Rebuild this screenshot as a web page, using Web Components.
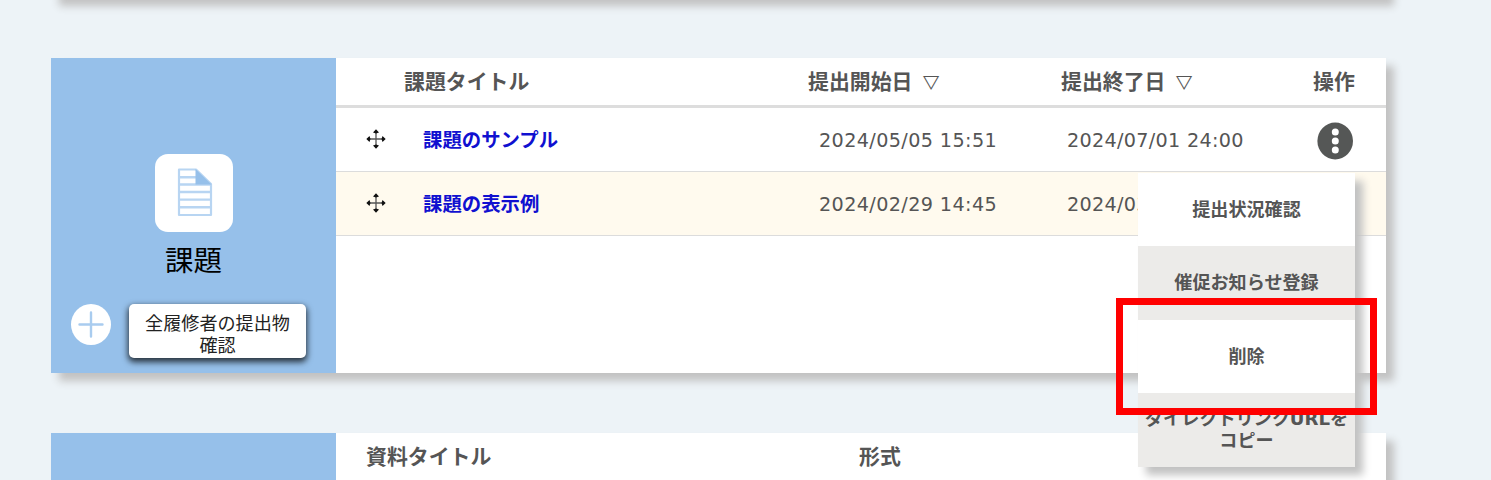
<!DOCTYPE html>
<html lang="ja">
<head>
<meta charset="utf-8">
<title>課題</title>
<style>
html,body{margin:0;height:480px;overflow:hidden;background:#edf3f7}
body{font-family:"DejaVu Sans","Noto Sans CJK JP",sans-serif;color:#555}
</style>
</head>
<body>
<course-page></course-page>
<script>
const define=(name,html)=>customElements.define(name,class extends HTMLElement{
  constructor(){super();this.attachShadow({mode:'open'}).innerHTML=html;}
});

define('course-card',`<style>
:host{display:grid;grid-template-columns:285px 1fr;background:#fff;box-shadow:8px 8px 8px #c2c2c2;box-sizing:border-box}
.side{background:#96c0ea;display:flex;flex-direction:column;min-width:0}
.body{min-width:0}
</style><div class="side"><slot name="side"></slot></div><div class="body"><slot></slot></div>`);

define('side-panel',`<style>
:host{display:flex;flex-direction:column;align-items:center;color:#000;padding-top:96px}
svg{display:block}
h2{font:400 28.5px/40px "Noto Sans CJK JP",sans-serif;margin:7px 0 1px}
.actions{display:flex;align-self:stretch;padding:24px 30px 0 20px;gap:18px;align-items:flex-start}
button{flex:1;height:54px;padding:7px 0 0;border:0;border-radius:5px;background:#fff;color:#222;font:400 18.1px/22px "DejaVu Sans","Noto Sans CJK JP",sans-serif;box-shadow:0 3px 6px 1px rgba(0,0,0,.75)}
</style>
<svg width="78" height="78" viewBox="0 0 78 78"><rect width="78" height="78" rx="13" fill="#fff"/>
<path d="M24 15.500H41L56 30V61H24Z" fill="#fff" stroke="#b8d5f2" stroke-width="2.200" stroke-linejoin="round"/>
<path d="M24 23.200H41M24 30.500H56M24 38H56M24 45.600H56M24 53.200H56" stroke="#b8d5f2" stroke-width="2.400"/>
<path d="M40.500 15L56.500 30.500H40.500Z" fill="#96c0ea"/></svg>
<h2>課題</h2>
<div class="actions"><svg width="40" height="42" viewBox="0 0 40 42"><ellipse cx="20" cy="20.500" rx="20" ry="20.500" fill="#fff"/><path d="M8.500 20.500H31.500M20 8.500V32.500" stroke="#a9ccef" stroke-width="2.400" stroke-linecap="round"/></svg>
<button>全履修者の提出物<br>確認</button></div>`);

define('head-row',`<style>
:host{display:flex;height:44px;padding:0 30px 3px 68px;border-bottom:3px solid #ddd;align-items:center;font:700 20.9px/30px "Noto Sans CJK JP",sans-serif;color:#555;white-space:nowrap}
</style><slot></slot>`);
define('head-cell',`<style>:host{display:flex;align-items:center;flex:none;width:var(--w,auto)}</style><slot></slot>`);
define('sort-mark',`<style>:host{display:block;margin:3px 0 0 10.500px;transform:scaleY(.87);font:400 21px/24px "DejaVu Sans","Noto Sans CJK JP",sans-serif}</style><slot></slot>`);

define('task-row',`<style>
:host{display:grid;grid-template-columns:57px 396px 248px 250px 1fr;height:63px;padding-left:30px;align-items:center;border-bottom:1px solid #dcdcdc;background:var(--row,#fff);font-size:19.2px;letter-spacing:.38px;white-space:nowrap}
svg{display:block;margin-top:-2px}
.t{font:700 19.4px/28px "Noto Sans CJK JP",sans-serif;letter-spacing:0;color:#1010d0;margin-top:-2px}
::slotted(span[slot=start]),::slotted(span[slot=end]){padding-top:2px}
::slotted(span[slot=end]){letter-spacing:.3px}
</style>
<svg width="20" height="20" viewBox="0 0 20 20" fill="#111"><path d="M10 3V17M3 10H17" stroke="#555" stroke-width="1.300"/><path d="M10 .3L13 3.500L10 4.500L7 3.500ZM10 19.700L13 16.500L10 15.500L7 16.500ZM.3 10L3.500 7L4.500 10L3.500 13ZM19.700 10L16.500 7L15.500 10L16.500 13Z"/></svg>
<span class="t"><slot name="title"></slot></span><slot name="start"></slot><slot name="end"></slot><slot name="op"></slot>`);

define('more-button',`<style>:host{display:block}svg{display:block;margin-top:3px}</style>
<svg width="36" height="38" viewBox="0 0 36 38"><ellipse cx="18.200" cy="19" rx="17.800" ry="18.500" fill="#555756"/><g fill="#fff"><circle cx="18.300" cy="10" r="3.500"/><circle cx="18.300" cy="19" r="3.500"/><circle cx="18.300" cy="28" r="3.500"/></g></svg>`);

define('action-menu',`<style>
:host{position:absolute;left:1138px;top:173px;width:217px;height:294px;display:grid;grid-template-rows:73px 74px 73px 74px;box-shadow:8px 8px 8px #c2c2c2;background:#fff}
::slotted(div){display:flex;align-items:center;justify-content:center;text-align:center;font:700 18.1px/22px "DejaVu Sans","Noto Sans CJK JP",sans-serif;color:#555;white-space:nowrap}
::slotted(div:nth-child(even)){background:#ecebe9}
</style><slot></slot>`);

define('focus-frame',`<style>:host{position:absolute;left:1116px;top:298px;width:261px;height:117px;box-sizing:border-box;border:7px solid #f00}</style>`);

define('course-page',`<style>
:host{display:block;position:relative;height:480px;overflow:hidden}
main{display:flex;flex-direction:column;gap:60px;width:1335px;margin:-102px 0 0 51px}
.prev{height:100px}.tasks{height:315px}.docs{height:200px}
.alt{--row:#fffaee}
</style>
<main>
<course-card class="prev"></course-card>
<course-card class="tasks"><side-panel slot="side"></side-panel>
<head-row><head-cell style="--w:404px">課題タイトル</head-cell><head-cell style="--w:253px">提出開始日<sort-mark>▽</sort-mark></head-cell><head-cell style="--w:252px">提出終了日<sort-mark>▽</sort-mark></head-cell><head-cell>操作</head-cell></head-row>
<task-row><span slot="title">課題のサンプル</span><span slot="start">2024/05/05 15:51</span><span slot="end">2024/07/01 24:00</span><more-button slot="op"></more-button></task-row>
<task-row class="alt"><span slot="title">課題の表示例</span><span slot="start">2024/02/29 14:45</span><span slot="end">2024/03</span></task-row>
</course-card>
<course-card class="docs"><head-row style="padding-left:30px"><head-cell style="--w:493px">資料タイトル</head-cell><head-cell>形式</head-cell></head-row></course-card>
</main>
<action-menu><div>提出状況確認</div><div>催促お知らせ登録</div><div>削除</div><div>ダイレクトリンクURLを<br>コピー</div></action-menu>
<focus-frame></focus-frame>`);
</script>
</body>
</html>
